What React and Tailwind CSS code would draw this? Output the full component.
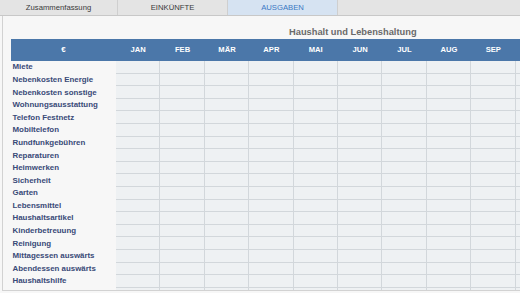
import React from 'react';

const tabs = [
  { label: 'Zusammenfassung', width: 'w-[118px]' },
  { label: 'EINKÜNFTE', width: 'w-[110px]' },
  { label: 'AUSGABEN', width: 'w-[110px]', active: true },
];

const months = ['JAN', 'FEB', 'MÄR', 'APR', 'MAI', 'JUN', 'JUL', 'AUG', 'SEP', ''];

const rows = [
  'Miete',
  'Nebenkosten Energie',
  'Nebenkosten sonstige',
  'Wohnungsausstattung',
  'Telefon Festnetz',
  'Mobiltelefon',
  'Rundfunkgebühren',
  'Reparaturen',
  'Heimwerken',
  'Sicherheit',
  'Garten',
  'Lebensmittel',
  'Haushaltsartikel',
  'Kinderbetreuung',
  'Reinigung',
  'Mittagessen auswärts',
  'Abendessen auswärts',
  'Haushaltshilfe',
  '',
];

const App = () => {
  return (
    <div
      className="w-[520px] h-[293px] overflow-hidden bg-[#f7f7f7] flex flex-col"
      style={{ fontFamily: '"Liberation Sans", Arial, sans-serif' }}
    >
      {/* Tabs */}
      <div className="h-[16px] shrink-0 flex bg-[#e4e4e4] border-b border-[#c8c8c8]">
        {tabs.map((tab) => (
          <div
            key={tab.label}
            className={`${tab.width} h-full flex items-center justify-center border-r border-[#cfcfcf] text-[7.7px] ${
              tab.active ? 'bg-[#d6e3f2] text-[#3a78c4]' : 'text-[#3a3a3a]'
            }`}
          >
            {tab.label}
          </div>
        ))}
        <div className="flex-1 h-full" />
      </div>

      {/* Panel */}
      <div className="h-[275px] shrink-0 ml-[2px] border-l border-b border-[#d2d2d2] bg-[#f7f7f7] overflow-hidden">
        <div className="h-[23px] flex items-end pb-[2px] pl-[286px]">
          <span className="text-[9.3px] font-bold text-[#6a6a6a] leading-none">
            Haushalt und Lebenshaltung
          </span>
        </div>

        <div className="ml-[8px] w-[560px]">
          {/* Header */}
          <div className="h-[22px] flex bg-[#4b77a9] text-white font-bold text-[7.6px]">
            <div className="w-[105px] flex items-center justify-center text-[8px]">€</div>
            {months.map((m, i) => (
              <div key={i} className="w-[44.4px] flex items-center justify-center">
                {m}
              </div>
            ))}
          </div>

          {/* Rows */}
          {rows.map((row, r) => (
            <div key={r} className="h-[12.6px] flex">
              <div className="w-[105px] pl-[1.5px] flex items-center text-[7.9px] font-bold text-[#394a78] whitespace-nowrap">
                {row}
              </div>
              {months.map((m, i) => (
                <div
                  key={i}
                  className="w-[44.4px] bg-[#eef1f3] border-b border-r border-[#d2d7db]"
                />
              ))}
            </div>
          ))}
        </div>
      </div>
    </div>
  );
};

export default App;
